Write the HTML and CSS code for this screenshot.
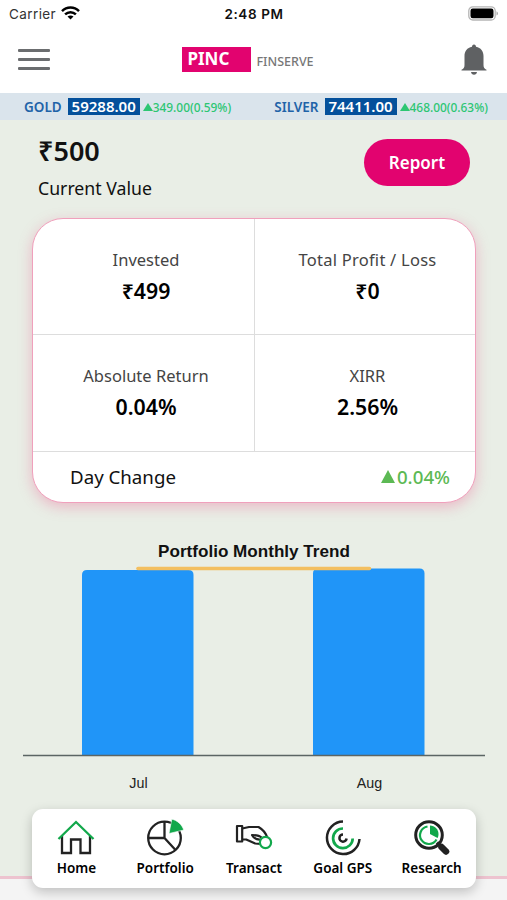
FILE: index.html
```html
<!DOCTYPE html>
<html lang="en">
<head>
    <meta charset="UTF-8">
    <meta name="viewport" content="width=device-width, initial-scale=1.0">
    <title>PINC Finserve</title>
    <link rel="stylesheet" href="styles.css">
</head>
<body>
    <div class="status-bar">
        <div class="carrier">
            <span>Carrier</span>
            <svg width="19" height="14" viewBox="0 0 19 14" fill="none" stroke="#000" stroke-width="2.5">
                <path d="M1 5.2C5.8 .4 13.2 .4 18 5.2"/>
                <path d="M4.1 8.4c3.1-3 7.7-3 10.8 0"/>
                <path d="M9.5 13.6L6.5 10.6c1.7-1.5 4.3-1.5 6 0z" fill="#000" stroke="none"/>
            </svg>
        </div>
        <div class="time">2:48 PM</div>
        <svg class="battery" width="31" height="15" viewBox="0 0 31 15">
            <rect x=".8" y=".8" width="26.4" height="13.2" rx="4" fill="#fff" stroke="#b5b5b5" stroke-width="1.3"/>
            <rect x="2.5" y="2.5" width="23" height="9.8" rx="2.2" fill="#000"/>
            <path d="M28.5 5.2c2 .8 2 3.6 0 4.4z" fill="#aaa"/>
        </svg>
    </div>

    <header class="header">
        <div class="menu">
            <span></span>
            <span></span>
            <span></span>
        </div>
        <div class="brand">
            <span class="logo">PINC</span>
            <span class="brand-name">FINSERVE</span>
        </div>
        <svg class="bell" width="26" height="32" viewBox="0 0 26 32" fill="#5f6163">
            <path d="M13 .5c1.3 0 2 1 2 2.3 4.9.9 7.500 4.600 7.500 9.200v9c0 2.500 1 3.800 3 4.800v.8H.5v-.8C2.500 24.800 3.500 23.500 3.500 21v-9c0-4.600 2.600-8.300 7.500-9.200 0-1.300.7-2.300 2-2.300z"/>
            <path d="M10 28h6c-.3 1.800-1.400 2.700-3 2.700s-2.700-.9-3-2.700z"/>
        </svg>
    </header>

    <div class="ticker">
        <div class="rate">
            <span class="metal">GOLD</span>
            <span class="price">59288.00</span>
            <span class="change"><i class="up"></i>349.00(0.59%)</span>
        </div>
        <div class="rate">
            <span class="metal">SILVER</span>
            <span class="price">74411.00</span>
            <span class="change"><i class="up"></i>468.00(0.63%)</span>
        </div>
    </div>

    <main>
        <section class="summary">
            <div>
                <div class="amount">₹500</div>
                <div class="caption">Current Value</div>
            </div>
            <button class="report">Report</button>
        </section>

        <section class="card">
            <div class="stats">
                <div class="stat">
                    <div class="label">Invested</div>
                    <div class="value">₹499</div>
                </div>
                <div class="stat">
                    <div class="label wide">Total Profit / Loss</div>
                    <div class="value">₹0</div>
                </div>
                <div class="stat">
                    <div class="label">Absolute Return</div>
                    <div class="value">0.04%</div>
                </div>
                <div class="stat">
                    <div class="label">XIRR</div>
                    <div class="value">2.56%</div>
                </div>
            </div>
            <div class="day-change">
                <span>Day Change</span>
                <span class="gain"><i class="up"></i>0.04%</span>
            </div>
        </section>

        <section class="chart">
            <h2>Portfolio Monthly Trend</h2>
            <svg width="462" height="192" viewBox="0 0 462 192">
                <path d="M59 192V12q0-5 5-5h101.500q5 0 5 5v180z" fill="#2095f8"/>
                <path d="M290 192V10.500q0-5 5-5h101.500q5 0 5 5V192z" fill="#2095f8"/>
                <path d="M115 5.500h231.500" stroke="#f3bf60" stroke-width="3.600" stroke-linecap="round"/>
                <path d="M0 192.500h462" stroke="#5b6564" stroke-width="1.600"/>
            </svg>
            <div class="months">
                <span>Jul</span>
                <span>Aug</span>
            </div>
        </section>
    </main>

    <div class="bottom"></div>

    <nav class="tabs">
        <a class="tab">
            <svg width="38" height="38" viewBox="0 0 38 38" fill="none" stroke-width="2.300">
                <path d="M5 18v17h9V21.500h9.500V35h9.500V18" stroke="#222"/>
                <path d="M1.500 21L19 4l17.500 17" stroke="#12a84b"/>
            </svg>
            <span>Home</span>
        </a>
        <a class="tab">
            <svg width="38" height="38" viewBox="0 0 38 38" fill="none" stroke="#222" stroke-width="2.300">
                <circle cx="18.500" cy="20" r="16.300"/>
                <path d="M18.500 4v16H2.200M18.500 20l11 12"/>
                <path d="M23 15.500L25.800 1.200C31 2.200 36 6.500 37.700 12z" fill="#12a84b" stroke="#fff" stroke-width=".6"/>
            </svg>
            <span>Portfolio</span>
        </a>
        <a class="tab">
            <svg width="38" height="38" viewBox="0 0 38 38" fill="none" stroke="#222" stroke-width="2.200" stroke-linejoin="round">
                <path d="M2 8h5.200v15.500H2z"/>
                <path d="M7.200 10.500L14 9h9.500c4.500 2.500 7.500 6.500 9 11"/>
                <path d="M7.200 21.500h4l9 4 5.500.500"/>
                <path d="M26.500 19.500c-2-2-5-2.500-9.500-2.500 1.500 3 4.500 5 9 4.500"/>
                <circle cx="30.500" cy="24.500" r="5.600" fill="#fff" stroke="#12a84b"/>
            </svg>
            <span>Transact</span>
        </a>
        <a class="tab">
            <svg width="38" height="38" viewBox="0 0 38 38" fill="none" stroke-width="2.500">
                <path d="M19 3.500A16.300 16.300 0 1 0 35.500 21" stroke="#222"/>
                <path d="M19 10.500A9.800 9.800 0 1 0 28.700 20.500" stroke="#12a84b" stroke-width="2.700"/>
                <path d="M19 16.500a3.600 3.600 0 1 0 3.600 4" stroke="#222"/>
            </svg>
            <span>Goal GPS</span>
        </a>
        <a class="tab">
            <svg width="38" height="38" viewBox="0 0 38 38" fill="none">
                <path d="M28.500 29l4.500 4.500" stroke="#222" stroke-width="6.500" stroke-linecap="round"/>
                <path d="M24 24.500l4 4" stroke="#222" stroke-width="3.500"/>
                <circle cx="16" cy="17" r="13.300" stroke="#222" stroke-width="3"/>
                <path d="M14.500 8.500A8.800 8.800 0 1 0 23.500 21.500" stroke="#12a84b" stroke-width="2.200"/>
                <path d="M17 16V7.500c4.700 0 8.500 3.800 8.500 8.500 0 1.500-.300 3-1 4z" fill="#12a84b"/>
            </svg>
            <span>Research</span>
        </a>
    </nav>
</body>
</html>
```
FILE: styles.css
```css
* {
    box-sizing: border-box;
}
body {
    margin: 0;
    height: 900px;
    display: flex;
    flex-direction: column;
    position: relative;
    overflow: hidden;
    font-family: "Noto Sans", sans-serif;
    color: #111;
    background-color: #fff;
}
.status-bar {
    height: 28px;
    padding: 0 8px 0 9px;
    display: grid;
    grid-template-columns: 1fr auto 1fr;
    align-items: center;
    font-family: Inter, sans-serif;
    font-size: 13.5px;
    letter-spacing: 0.4px;
}
.carrier {
    display: flex;
    align-items: center;
    gap: 5px;
    color: #333;
}
.carrier svg {
    margin-bottom: 2px;
}
.time {
    font-weight: 600;
    color: #111;
    letter-spacing: 0.6px;
}
.battery {
    justify-self: end;
    margin-bottom: 2px;
}
.header {
    height: 65px;
    padding: 0 20px 2px 18px;
    display: grid;
    grid-template-columns: 1fr auto 1fr;
    align-items: center;
}
.menu {
    width: 32px;
    display: flex;
    flex-direction: column;
    gap: 6px;
}
.menu span {
    height: 3px;
    border-radius: 1px;
    background-color: #6b6d6f;
}
.brand {
    display: flex;
    align-items: center;
    gap: 5px;
    padding-right: 9px;
}
.logo {
    width: 69px;
    height: 25px;
    padding-left: 5px;
    background-color: #e2036f;
    color: #fff;
    font-size: 17px;
    font-weight: 700;
    line-height: 24px;
}
.brand-name {
    color: #777;
    font-size: 12.5px;
    font-weight: 500;
    padding-top: 3px;
}
.bell {
    justify-self: end;
}
.ticker {
    height: 27px;
    padding: 0 19px 0 24px;
    display: flex;
    justify-content: space-between;
    align-items: center;
    background-color: #dae4ec;
}
.rate {
    display: flex;
    align-items: center;
}
.metal {
    color: #1f63a8;
    font-size: 13.5px;
    font-weight: 600;
    margin-right: 6px;
}
.price {
    width: 72px;
    height: 17px;
    line-height: 17px;
    text-align: center;
    color: #fff;
    background-color: #04509b;
    font-size: 15px;
    font-weight: 600;
    margin-right: 3px;
}
.change {
    display: flex;
    align-items: center;
    color: #2cc673;
    font-size: 11.9px;
    font-weight: 500;
}
.up {
    display: inline-block;
    border-left: 5px solid transparent;
    border-right: 5px solid transparent;
    border-bottom: 8px solid currentColor;
}
main {
    height: 756px;
    background-color: #e9eee6;
}
.summary {
    height: 98px;
    padding: 13px 37px 0 38px;
    display: flex;
    justify-content: space-between;
    align-items: flex-start;
}
.amount {
    font-size: 27px;
    font-weight: 600;
    line-height: 36px;
}
.caption {
    font-size: 17.7px;
    line-height: 24px;
    margin-top: 7px;
}
.report {
    width: 106px;
    height: 47px;
    margin-top: 6px;
    border: none;
    border-radius: 24px;
    background-color: #e2036f;
    color: #fff;
    font-family: inherit;
    font-size: 17px;
    font-weight: 600;
}
.card {
    height: 285px;
    margin: 0 31px 0 32px;
    border: 1px solid #f0a0bc;
    border-radius: 31px;
    background-color: #fff;
    box-shadow: 0 4px 14px rgba(235, 90, 140, 0.36);
}
.stats {
    display: grid;
    grid-template-columns: 222px 1fr;
    grid-template-rows: 116px 117px;
}
.stat {
    padding: 29px 0 0 5px;
    text-align: center;
    border-bottom: 1px solid #ddd;
}
.stat:nth-child(odd) {
    border-right: 1px solid #ddd;
}
.label {
    font-size: 16.5px;
    line-height: 24px;
    color: #444;
}
.label.wide {
    letter-spacing: 0.25px;
}
.value {
    font-size: 21.3px;
    font-weight: 600;
    line-height: 28px;
    margin-top: 5px;
    color: #000;
}
.day-change {
    height: 48px;
    padding: 0 25px 0 37px;
    display: flex;
    justify-content: space-between;
    align-items: center;
    font-size: 18.7px;
}
.gain {
    display: flex;
    align-items: center;
    gap: 2px;
    color: #5cb954;
    font-weight: 500;
}
.gain .up {
    border-left-width: 7px;
    border-right-width: 7px;
    border-bottom-width: 13px;
}
.chart {
    padding: 38px 22px 0 23px;
    font-family: "Liberation Sans", Arial, sans-serif;
}
.chart h2 {
    margin: 0;
    font-size: 17.1px;
    line-height: 22px;
    text-align: center;
}
.chart svg {
    display: block;
    overflow: visible;
}
.months {
    display: grid;
    grid-template-columns: 1fr 1fr;
    margin-top: 20px;
    text-align: center;
    font-size: 14.3px;
    color: #222;
}
.bottom {
    flex: 1;
    border-top: 3px solid #edc3cf;
    background-color: #f4f4f4;
}
.tabs {
    position: absolute;
    left: 32px;
    top: 809px;
    width: 444px;
    height: 79px;
    padding: 9px 0 0;
    display: grid;
    grid-template-columns: repeat(5, 1fr);
    border-radius: 11px;
    background-color: #fff;
    box-shadow: 0 4px 12px rgba(0, 0, 0, 0.22);
}
.tab {
    display: flex;
    flex-direction: column;
    align-items: center;
    font-size: 13.5px;
    font-weight: 600;
    line-height: 20px;
    color: #000;
    white-space: nowrap;
}
.tab span {
    margin-top: 2px;
}
```
